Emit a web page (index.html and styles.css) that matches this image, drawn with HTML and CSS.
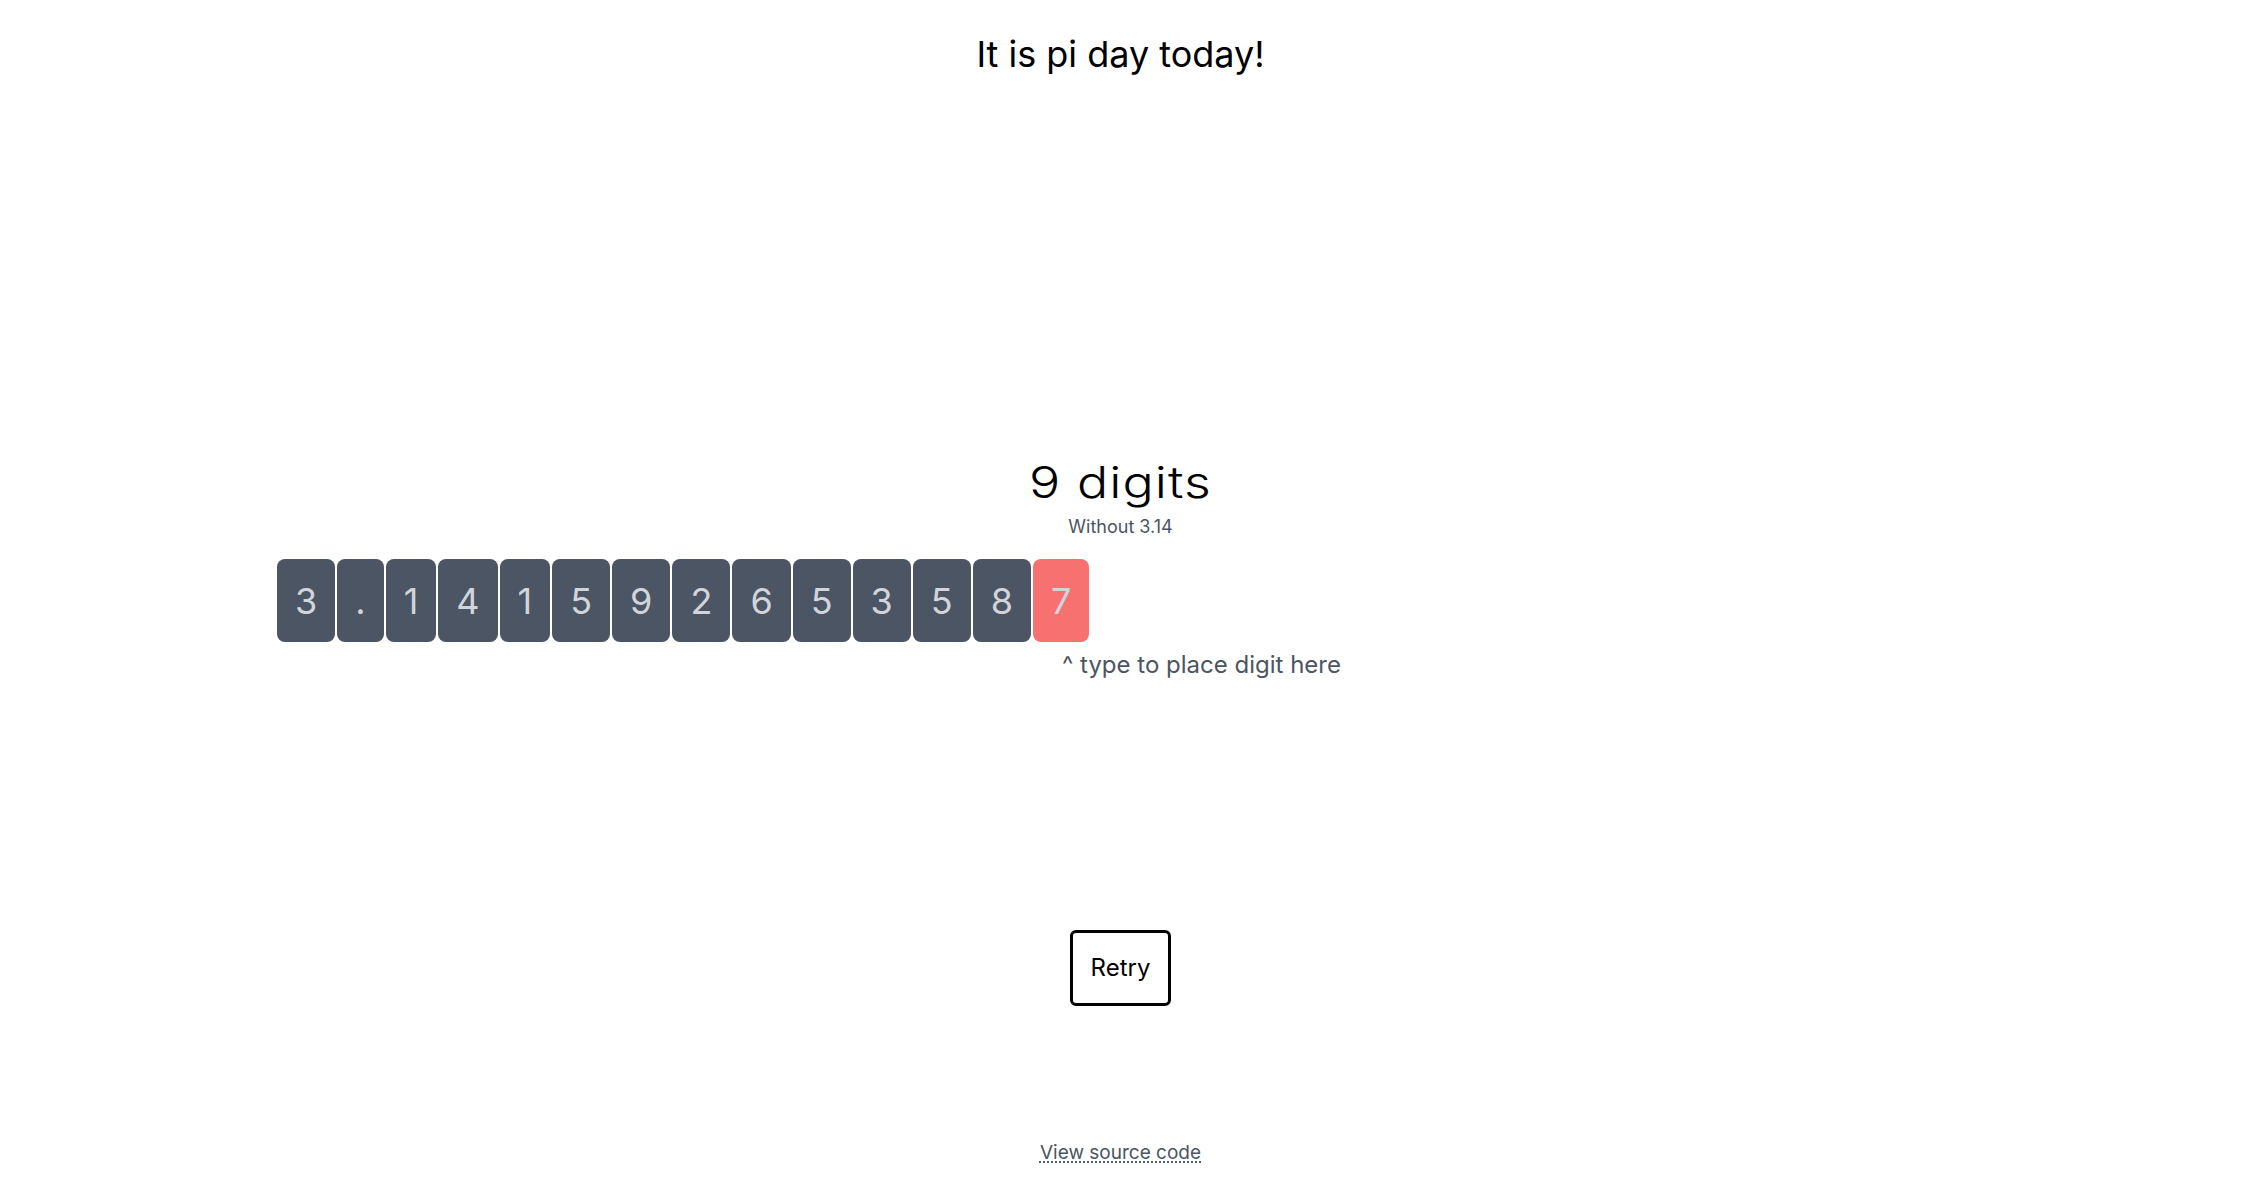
FILE: index.html
```html
<!DOCTYPE html>
<html>
<head>
<meta charset="utf-8">
<link rel="stylesheet" href="styles.css">
</head>
<body>
<div class="page">
  <h1 class="title">It is pi day today!</h1>
  <div class="score">
    <div class="count"><span class="count-text">9 digits</span></div>
    <div class="sub">Without 3.14</div>
  </div>
  <div class="game">
    <div class="row">
      <span class="box">3</span><span class="box">.</span><span class="box">1</span><span class="box">4</span><span class="box">1</span><span class="box">5</span><span class="box">9</span><span class="box">2</span><span class="box">6</span><span class="box">5</span><span class="box">3</span><span class="box">5</span><span class="box">8</span><span class="box wrong">7</span>
    </div>
    <div class="hint">^ type to place digit here</div>
  </div>
  <div class="actions">
    <button class="retry">Retry</button>
  </div>
  <div class="footer">
    <a class="source" href="#">View source code</a>
  </div>
</div>
</body>
</html>
```

FILE: styles.css
```css
html, body {
  margin: 0;
  padding: 0;
  background: #ffffff;
}
body {
  font-family: Inter, "Noto Sans", sans-serif;
  color: #000;
}
.page {
  display: flex;
  flex-direction: column;
  align-items: stretch;
  min-height: 1199px;
}
.title {
  margin: 34px 0 0 0;
  font-size: 36px;
  line-height: 40px;
  font-weight: 400;
  text-align: center;
}
.score {
  margin-top: 387px;
  text-align: center;
}
.count {
  font-size: 44px;
  line-height: 43px;
  font-weight: 350;
}
.count-text {
  display: inline-block;
  letter-spacing: 0.02em;
  transform: scaleX(1.18);
  transform-origin: center;
}
.sub {
  margin-top: 12px;
  font-size: 18px;
  line-height: 21px;
  color: #4b5563;
}
.game {
  margin-top: 22px;
  padding-left: 277px;
}
.row {
  display: flex;
  gap: 2px;
}
.box {
  display: block;
  background: #4b5563;
  color: #d1d5db;
  font-size: 36px;
  line-height: 40px;
  padding: 21.5px 18px;
  border-radius: 8px;
}
.box.wrong {
  background: #f87171;
}
.hint {
  margin-top: 7px;
  margin-left: 785px;
  font-size: 24px;
  line-height: 32px;
  color: #4b5563;
}
.actions {
  margin-top: 249px;
  display: flex;
  justify-content: center;
}
.retry {
  font-family: Inter, "Noto Sans", sans-serif;
  font-size: 24px;
  line-height: 32px;
  padding: 19px 18px;
  background: #fff;
  color: #000;
  border: 3px solid #000;
  border-radius: 6px;
}
.footer {
  margin-top: 133px;
  text-align: center;
}
.source {
  font-size: 19px;
  line-height: 28px;
  color: #4b5563;
  text-decoration: underline dotted;
  text-underline-offset: 3px;
}
```
